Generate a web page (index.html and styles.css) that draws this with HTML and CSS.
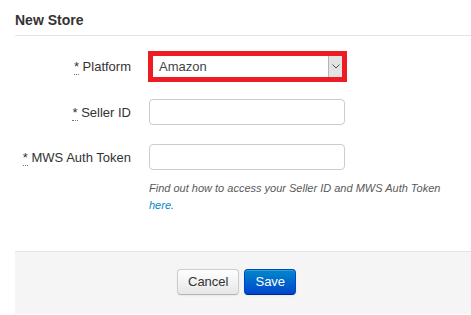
FILE: index.html
```html
<!DOCTYPE html>
<html lang="en">
<head>
<meta charset="utf-8">
<title>New Store</title>
<link rel="stylesheet" href="styles.css">
</head>
<body>
<div class="page">
  <h3 class="title">New Store</h3>
  <form class="form">
    <div class="row row-platform">
      <label class="label"><abbr class="req" title="required">*</abbr> Platform</label>
      <div class="control">
        <div class="select-wrap has-error">
          <select class="select">
            <option>Amazon</option>
          </select>
          <span class="select-arrow">
            <svg width="8" height="5" viewBox="0 0 8 5"><path d="M0.5 0.5 L4 4 L7.5 0.5" fill="none" stroke="#555" stroke-width="1"/></svg>
          </span>
        </div>
      </div>
    </div>
    <div class="row row-seller">
      <label class="label"><abbr class="req" title="required">*</abbr> Seller ID</label>
      <div class="control"><input class="input" type="text"></div>
    </div>
    <div class="row row-token">
      <label class="label"><abbr class="req" title="required">*</abbr> MWS Auth Token</label>
      <div class="control"><input class="input" type="text"></div>
    </div>
    <p class="help">Find out how to access your Seller ID and MWS Auth Token <a href="#" class="link">here</a>.</p>
  </form>
  <div class="actions">
    <button class="btn" type="button">Cancel</button>
    <button class="btn btn-primary" type="button">Save</button>
  </div>
</div>
</body>
</html>
```
FILE: styles.css
```css
html, body {
  margin: 0;
  padding: 0;
  background: #fff;
}
body {
  font-family: "Liberation Sans", Arial, sans-serif;
  font-size: 13px;
  color: #333;
  overflow: hidden;
}
.page {
  padding-left: 15px;
}
.title {
  margin: 0;
  padding: 12px 0 7px;
  font-size: 14px;
  line-height: 16px;
  font-weight: bold;
  color: #333;
  border-bottom: 1px solid #e5e5e5;
}
.form {
  margin: 0;
  padding-top: 15px;
}
.row {
  display: flex;
  align-items: center;
}
.row-platform { height: 31px; }
.row-seller { height: 26px; margin-top: 17px; }
.row-token { height: 26px; margin-top: 19px; }
.label {
  width: 116px;
  text-align: right;
  line-height: 15px;
  color: #333;
  flex: none;
}
.req {
  text-decoration: none;
  border-bottom: 1px dotted #777;
  cursor: help;
}
.control {
  margin-left: 18px;
}
.select-wrap {
  position: relative;
  width: 189px;
  height: 21px;
  margin-left: -1px;
  border: 5px solid #ed1c24;
  background: #fff;
}
.select {
  display: block;
  width: 100%;
  height: 21px;
  margin: 0;
  padding: 0 0 0 6px;
  border: 0;
  outline: none;
  background: #fff;
  -webkit-appearance: none;
  appearance: none;
  font-family: "Liberation Sans", Arial, sans-serif;
  font-size: 13px;
  color: #444;
}
.select-arrow {
  position: absolute;
  top: 0;
  right: 0;
  width: 13px;
  height: 21px;
  border-left: 1px solid #b5b5b5;
  background: #e3e3e3;
  display: flex;
  align-items: center;
  justify-content: center;
  pointer-events: none;
}
.input {
  display: block;
  box-sizing: border-box;
  width: 196px;
  height: 26px;
  margin: 0;
  padding: 0 6px;
  border: 1px solid #ccc;
  border-radius: 4px;
  background: #fff;
  font-family: "Liberation Sans", Arial, sans-serif;
  font-size: 13px;
}
.help {
  margin: 10px 0 0 134px;
  width: 300px;
  font-size: 11px;
  line-height: 17px;
  font-style: italic;
  color: #595959;
}
.link {
  color: #0088cc;
  text-decoration: none;
}
.actions {
  margin-top: 37px;
  height: 45px;
  padding: 17px 0 0 162px;
  border-top: 1px solid #e5e5e5;
  background: #f5f5f5;
  display: flex;
  align-items: flex-start;
  gap: 5px;
}
.btn {
  box-sizing: border-box;
  height: 26px;
  margin: 0;
  padding: 0 10px;
  font-family: "Liberation Sans", Arial, sans-serif;
  font-size: 13px;
  line-height: 24px;
  color: #333;
  border: 1px solid #ccc;
  border-bottom-color: #b3b3b3;
  border-radius: 4px;
  background: linear-gradient(#ffffff, #e6e6e6);
  box-shadow: inset 0 1px 0 rgba(255,255,255,.2), 0 1px 2px rgba(0,0,0,.05);
  cursor: pointer;
}
.btn-primary {
  color: #fff;
  border-color: #0044cc #0044cc #002a80;
  background: linear-gradient(#0088cc, #0044cc);
}
```
